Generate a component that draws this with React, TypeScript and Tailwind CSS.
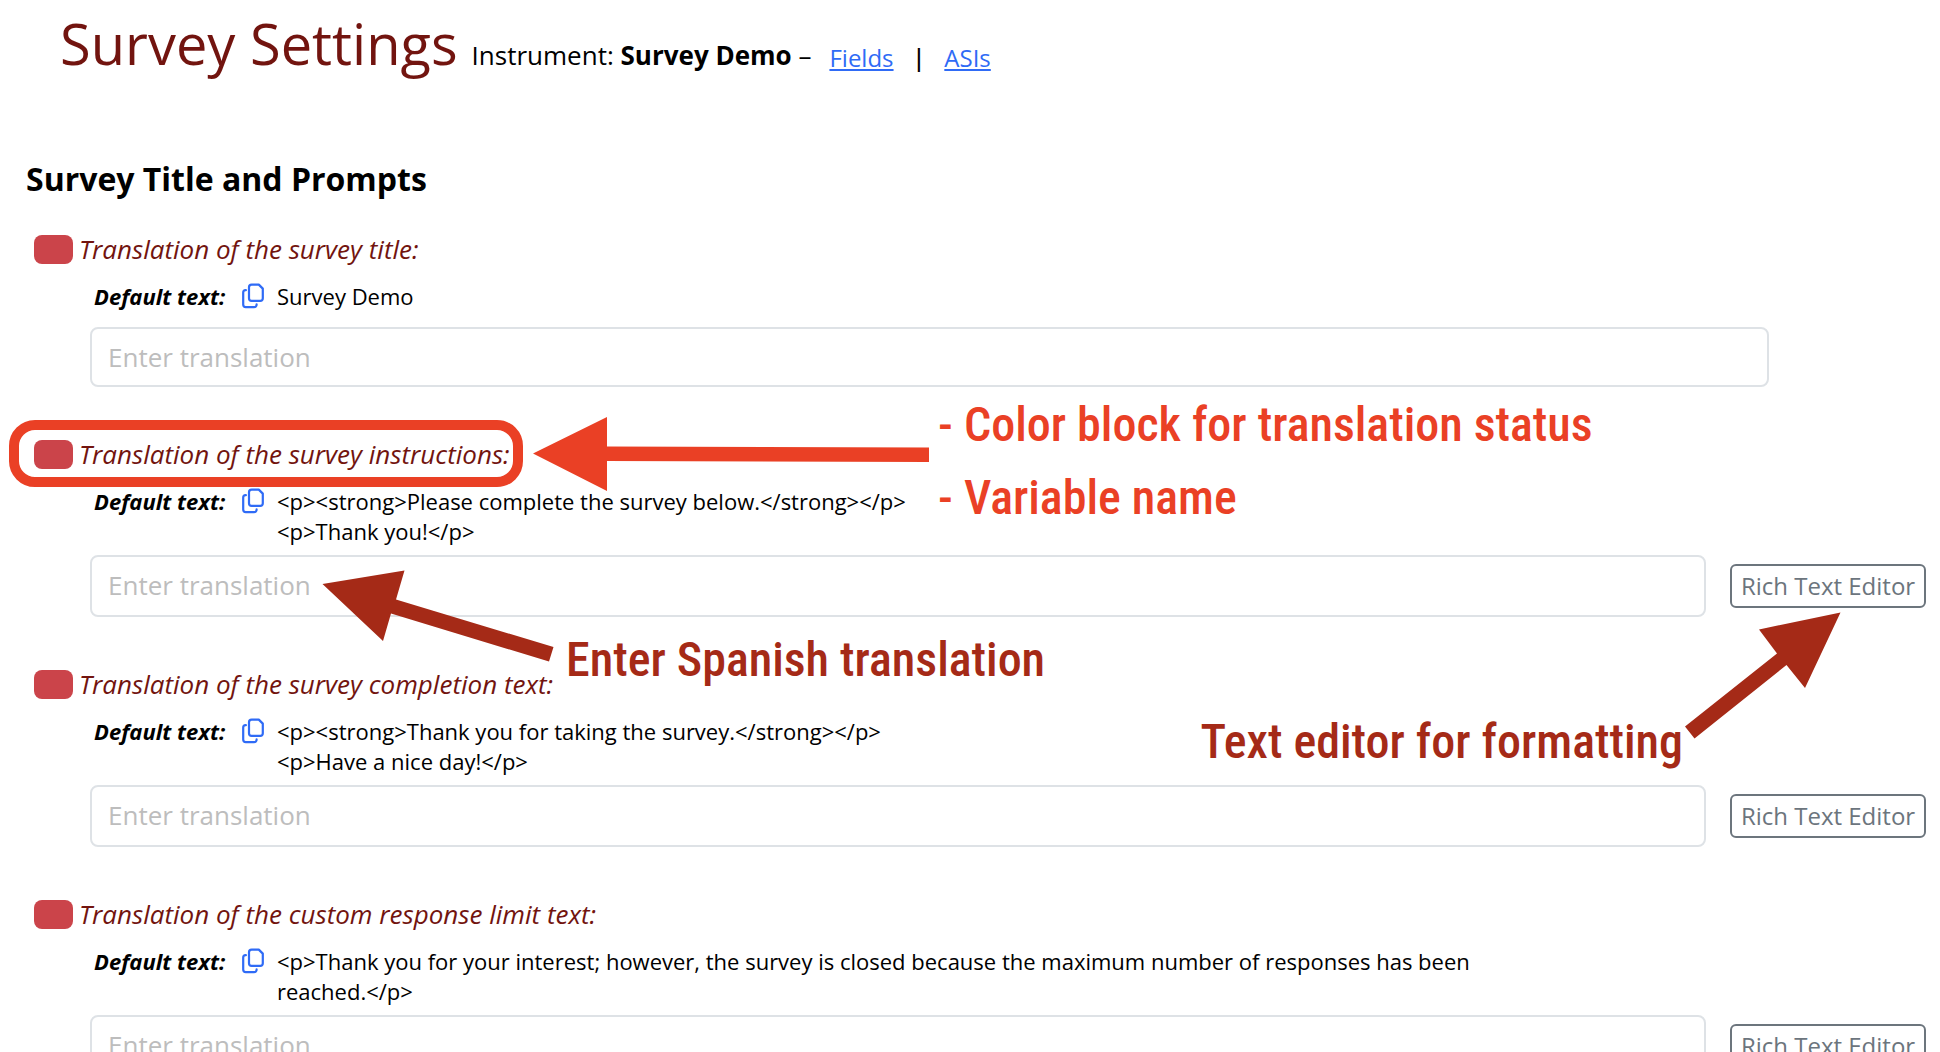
import { useId } from 'react';

type Field = {
  label: string;
  text: string;
  rich?: boolean;
};

const fields: Field[] = [
  { label: 'Translation of the survey title:', text: 'Survey Demo' },
  {
    label: 'Translation of the survey instructions:',
    text: '<p><strong>Please complete the survey below.</strong></p>\n<p>Thank you!</p>',
    rich: true,
  },
  {
    label: 'Translation of the survey completion text:',
    text: '<p><strong>Thank you for taking the survey.</strong></p>\n<p>Have a nice day!</p>',
    rich: true,
  },
  {
    label: 'Translation of the custom response limit text:',
    text: '<p>Thank you for your interest; however, the survey is closed because the maximum number of responses has been reached.</p>',
    rich: true,
  },
];

function CopyIcon() {
  return (
    <svg viewBox="0 0 22 26" className="h-[26px] w-[22px]" fill="none" stroke="#2f6bf6" strokeWidth="2.2" strokeLinejoin="round" strokeLinecap="round">
      <path d="M9.6 1.6h7.2l4 4v9.6a2.6 2.6 0 0 1-2.6 2.6H9.6A2.6 2.6 0 0 1 7 15.2V4.2a2.6 2.6 0 0 1 2.6-2.6z" />
      <path d="M3.9 7.2H3.6A2.4 2.4 0 0 0 1.2 9.6v12a2.6 2.6 0 0 0 2.6 2.6h8.4a2.4 2.4 0 0 0 2.4-2.4v-.4" />
    </svg>
  );
}

function FieldRow({ field, children }: { field: Field; children?: React.ReactNode }) {
  const id = useId();
  const box =
    'block min-w-0 flex-1 resize-none overflow-hidden rounded-lg border-2 border-[#dee2e6] bg-white px-4 text-[26px] leading-9 placeholder:text-[#bdbdbd]';

  return (
    <section className="relative pb-[53px]">
      <div className="flex h-[29px] items-center gap-[6px] pl-[34px]">
        <span className="h-[29px] w-[39px] rounded-lg bg-[#cb444a]" />
        <label htmlFor={id} className="text-[26px] italic text-[#72140f]">{field.label}</label>
      </div>
      <div className="mt-[17px] flex items-start pl-[94px] text-[22px] leading-[30px]">
        <span className="w-[148px] shrink-0 font-bold italic">Default text:</span>
        <button type="button" aria-label="Copy default text" className="mr-[13px] mt-[2px] shrink-0">
          <CopyIcon />
        </button>
        <p className="max-w-[1250px] whitespace-pre-line">{field.text}</p>
      </div>
      {field.rich ? (
        <div className="mt-[9px] flex items-center gap-6 pl-[90px] pr-[14px]">
          <textarea id={id} rows={1} placeholder="Enter translation" className={`${box} h-[62px] py-[10px]`} />
          <button type="button" className="h-11 w-[196px] shrink-0 rounded-md border-2 border-[#6c757d] text-2xl text-[#6c757d]">
            Rich Text Editor
          </button>
        </div>
      ) : (
        <div className="mt-4 flex pl-[90px] pr-[171px]">
          <input id={id} type="text" placeholder="Enter translation" className={`${box} h-[60px]`} />
        </div>
      )}
      {children}
    </section>
  );
}

/* Callouts laid over the instructions field */
function Callouts() {
  const note = "absolute whitespace-nowrap font-['Roboto_Condensed',Roboto,sans-serif] font-medium text-[48px] leading-[54px]";

  return (
    <div className="pointer-events-none">
      <div className="absolute left-[9px] top-[-20px] h-[67px] w-[514px] rounded-[26px] border-[10px] border-[#ea4025]" />
      <svg viewBox="533 417 396 74" className="absolute left-[533px] top-[-23px] h-[74px] w-[396px]">
        <path d="M533 453.5L607 417V446.5L929 447.5V462L607 461V491z" fill="#ea4025" />
      </svg>
      <p className={`${note} left-[938px] top-[-42px] text-[#ea4025]`}>- Color block for translation status</p>
      <p className={`${note} left-[938px] top-[31px] text-[#ea4025]`}>- Variable name</p>
      <svg viewBox="322 570 232 92" className="absolute left-[322px] top-[130px] h-[92px] w-[232px]">
        <path d="M322.5 584L404.5 570.5L396 599.5L553.5 647L549 661.5L391 613.5L383 641z" fill="#a52a17" />
      </svg>
      <p className={`${note} left-[566px] top-[193px] text-[#a52a17]`}>Enter Spanish translation</p>
      <p className={`${note} right-[257px] top-[275px] text-[#a52a17]`}>Text editor for formatting</p>
      <svg viewBox="1685 612 156 127" className="absolute right-[99px] top-[172px] h-[127px] w-[156px]">
        <path d="M1840.5 612.5L1759 629.5L1777 653.5L1685 726.5L1694.5 738.5L1786.5 665L1805 688z" fill="#a52a17" />
      </svg>
    </div>
  );
}

export default function App() {
  return (
    <main className="h-screen overflow-hidden bg-white font-['Open_Sans',sans-serif] text-black">
      <header className="flex items-baseline pl-[60px] pt-[5px]">
        <h1 className="text-[56px] leading-[76px] text-[#72140f]">Survey Settings</h1>
        <p className="ml-[14px] text-[26px]">
          Instrument: <strong>Survey Demo</strong> –
        </p>
        <nav className="relative top-[2px] ml-[18px] flex items-baseline gap-[22px] text-2xl">
          <a href="#fields" className="text-[#2f6bf6] underline">Fields</a>
          <span className="font-['Liberation_Sans',sans-serif] text-[26px]">|</span>
          <a href="#asis" className="text-[#2f6bf6] underline">ASIs</a>
        </nav>
      </header>
      <h2 className="mb-[34px] mt-[76px] pl-[26px] text-[32px] font-bold leading-[44px]">Survey Title and Prompts</h2>
      {fields.map((field, i) => (
        <FieldRow key={field.label} field={field}>
          {i === 1 && <Callouts />}
        </FieldRow>
      ))}
    </main>
  );
}
